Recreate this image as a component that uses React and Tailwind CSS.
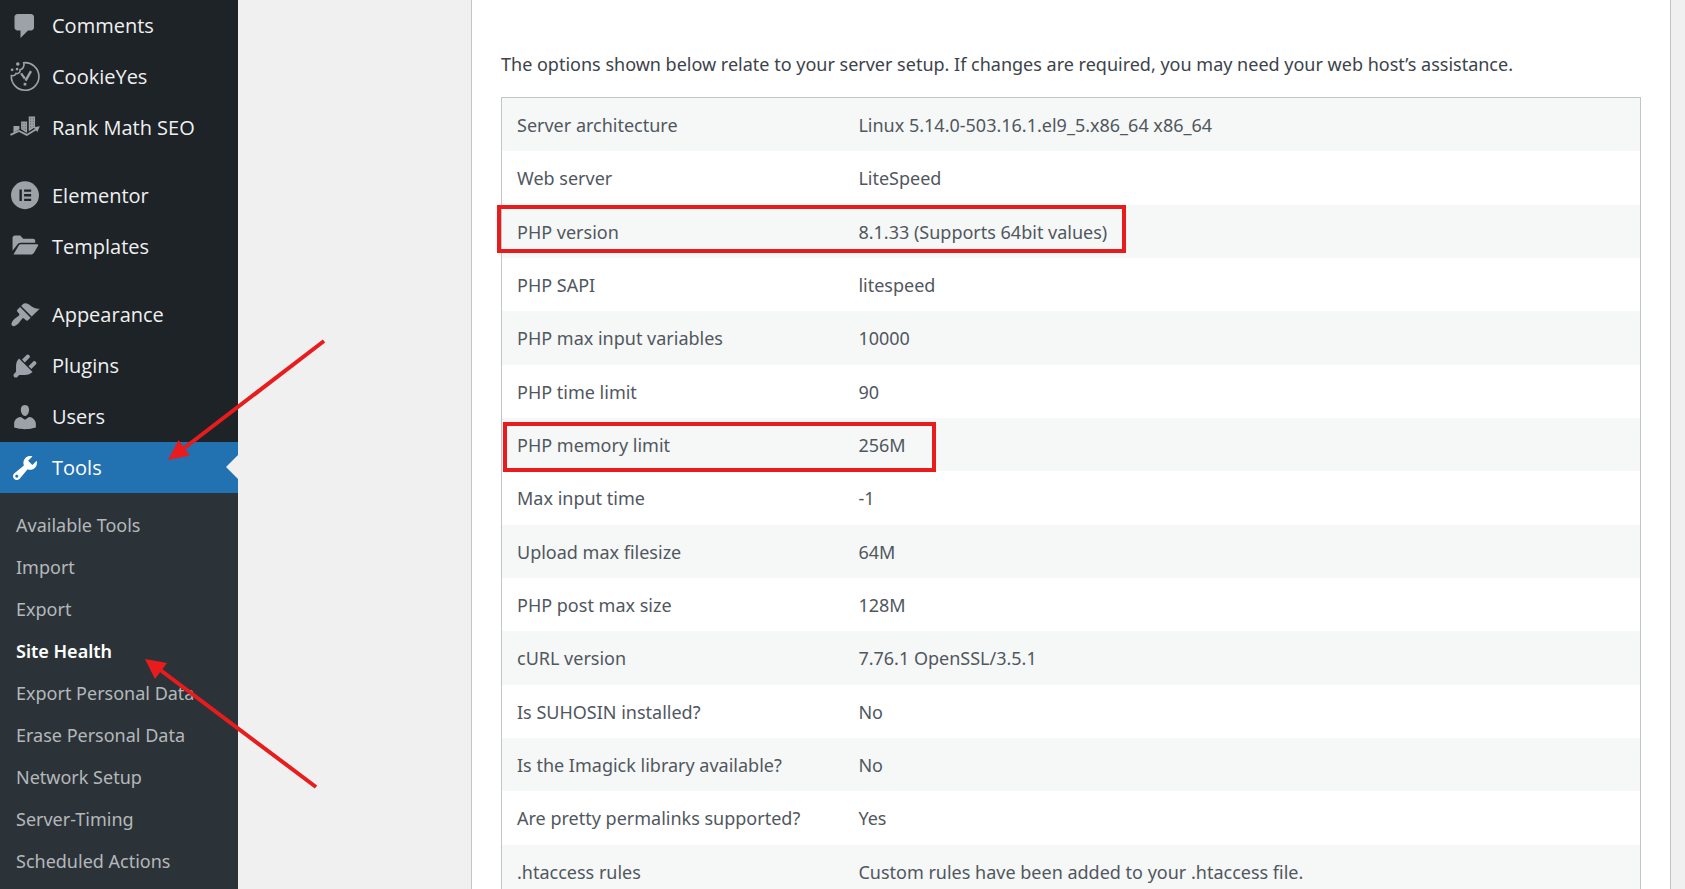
const ICONS = {
  comments: <path d="M5 2h9c1.1 0 2 .9 2 2v7c0 1.1-.9 2-2 2h-2l-5 5v-5H5c-1.1 0-2-.9-2-2V4c0-1.1.9-2 2-2z" />,
  cookie: (
    <>
      <path d="M9.2.5a9.200 9.200 0 1 1-8.300 8.600c1.500.3 2.600-.2 3.100-1.400 1.700.3 2.900-.9 2.700-2.500C8.600 4.800 9.800 2.800 9.200.5z" fill="none" stroke="currentColor" strokeWidth="1.100" />
      <circle cx="5.200" cy="1.300" r="1.200" />
      <circle cx="1.400" cy="5.200" r="0.900" />
      <circle cx="4.700" cy="4.700" r="0.900" />
      <path d="M7.400 7.600l2.500 3.500M14 6.100l-3.600 6.300" fill="none" stroke="currentColor" strokeWidth="1.600" />
      <rect x="9.100" y="13.900" width="1.800" height="1.800" />
    </>
  ),
  rank: (
    <>
      <path d="M2.300 8.700h4v2.200l-4 2.200zM7.400 5.600h4v7.200l-.5.400-3.500-2.300zM12.500 2.300h4.200v7.200l-4.200 2.700z" />
      <path d="M13.800 3.400v7M15.500 3.400v6M8.600 6.800v4M10.200 6.800v5" fill="none" stroke="#1d2327" strokeOpacity="0.450" strokeWidth="0.700" strokeDasharray="0.900 0.900" />
      <path d="M.3 14.600l5.700-2.600 5.200 2.600 6.500-4" fill="none" stroke="currentColor" strokeWidth="1.200" />
      <path d="M15.700 9.500l4.200-.6-1.700 3.800z" />
    </>
  ),
  elementor: (
    <>
      <circle cx="10" cy="9.500" r="9.300" />
      <path d="M6.300 5.700h1.600v7.600H6.300zM9.400 5.700h4.700v1.500H9.400zM9.400 8.700h4.700v1.600H9.400zM9.400 11.800h4.700v1.500H9.400z" fill="#1d2327" />
    </>
  ),
  folder: (
    <path d="M1.700 12.500V4c0-1 .7-1.700 1.600-1.700h3.500l2 2.200h6.600c.8 0 1.400.6 1.400 1.300v1.400H7.300c-1.200 0-2 .5-2.600 1.400zM2.300 15l3.400-5.800c.4-.7 1-1 1.700-1h10.800c.6 0 .8.500.5 1l-2.700 4.600c-.5.800-1.100 1.200-2 1.200z" />
  ),
  appearance: <path d="M14.480 11.060L7.410 3.990l1.500-1.500c.5-.56 2.300-.47 3.510.32 1.210.8 1.430 1.280 2.910 2.100 1.180.64 2.450 1.260 4.450.85zm-.71.71L6.700 4.700 4.930 6.470c-.39.39-.39 1.020 0 1.410l1.060 1.060c.39.39.39 1.030 0 1.420-.6.6-1.430 1.110-2.210 1.690-.35.26-.7.53-1.010.84C1.430 14.230.4 16.080 1.400 17.070c.99 1 2.840-.03 4.180-1.360.31-.31.58-.66.85-1.020.57-.78 1.080-1.610 1.690-2.210.39-.39 1.020-.39 1.410 0l1.060 1.060c.39.39 1.020.39 1.410 0z" />,
  plugins: <path d="M13.110 4.360L9.870 7.600 8 5.730l3.240-3.240c.35-.34 1.050-.2 1.560.32.52.51.66 1.210.31 1.550zm-8 1.770l.91-1.120 9.010 9.010-1.190.84c-.71.71-2.630 1.160-3.820 1.160H6.140L4.900 17.260c-.59.59-1.540.59-2.120 0-.59-.58-.59-1.530 0-2.120l1.240-1.240v-3.880c0-1.130.4-3.190 1.090-3.890zm7.260 3.970l3.240-3.240c.34-.35 1.040-.21 1.550.31.52.51.66 1.210.31 1.550l-3.240 3.250z" />,
  users: <path d="M10 9.250c-2.270 0-2.730-3.440-2.730-3.440C7 4.020 7.820 2 9.970 2c2.160 0 2.980 2.020 2.710 3.810 0 0-.41 3.440-2.680 3.440zm0 2.570L12.720 10c2.390 0 4.520 2.330 4.520 4.530v2.490s-3.650 1.130-7.240 1.130c-3.650 0-7.240-1.130-7.240-1.130v-2.490c0-2.250 1.940-4.480 4.470-4.480z" />,
  tools: <path d="M16.680 9.770c-1.340 1.340-3.300 1.670-4.950.99l-5.410 6.520c-.99.99-2.590.99-3.580 0s-.99-2.590 0-3.570l6.520-5.420c-.68-1.650-.35-3.610.99-4.950 1.280-1.280 3.120-1.620 4.720-1.060l-2.890 2.890 2.820 2.820 2.860-2.870c.53 1.580.18 3.390-1.080 4.650zM3.810 16.210c.4.39 1.040.39 1.430 0 .4-.4.4-1.040 0-1.430-.39-.4-1.030-.4-1.430 0-.39.39-.39 1.030 0 1.430z" />,
};

const MENU = [
  [
    ["comments", "Comments"],
    ["cookie", "CookieYes"],
    ["rank", "Rank Math SEO"],
  ],
  [
    ["elementor", "Elementor"],
    ["folder", "Templates"],
  ],
  [
    ["appearance", "Appearance"],
    ["plugins", "Plugins"],
    ["users", "Users"],
    ["tools", "Tools"],
  ],
];

const SUBMENU = [
  "Available Tools",
  "Import",
  "Export",
  "Site Health",
  "Export Personal Data",
  "Erase Personal Data",
  "Network Setup",
  "Server-Timing",
  "Scheduled Actions",
];

const ROWS = [
  ["Server architecture", "Linux 5.14.0-503.16.1.el9_5.x86_64 x86_64"],
  ["Web server", "LiteSpeed"],
  ["PHP version", "8.1.33 (Supports 64bit values)"],
  ["PHP SAPI", "litespeed"],
  ["PHP max input variables", "10000"],
  ["PHP time limit", "90"],
  ["PHP memory limit", "256M"],
  ["Max input time", "-1"],
  ["Upload max filesize", "64M"],
  ["PHP post max size", "128M"],
  ["cURL version", "7.76.1 OpenSSL/3.5.1"],
  ["Is SUHOSIN installed?", "No"],
  ["Is the Imagick library available?", "No"],
  ["Are pretty permalinks supported?", "Yes"],
  [".htaccess rules", "Custom rules have been added to your .htaccess file."],
];

function MenuItem({ icon, label }) {
  const active = label === "Tools";
  return (
    <li>
      <a
        href="#"
        className={
          active
            ? "relative flex h-[51px] items-center gap-3 bg-[#2271b1] pl-2.5 text-white"
            : "flex h-[51px] items-center gap-3 pl-2.5 text-[#f0f0f1]"
        }
      >
        <svg
          viewBox="0 0 20 20"
          fill="currentColor"
          aria-hidden="true"
          className={
            active ? "size-[30px] overflow-visible text-white" : "size-[30px] overflow-visible text-[#9ca2a7]"
          }
        >
          {ICONS[icon]}
        </svg>
        <span>{label}</span>
        {active && (
          <span className="absolute right-0 top-[13px] border-y-12 border-r-12 border-y-transparent border-r-[#f0f0f1]" />
        )}
      </a>
    </li>
  );
}

function Sidebar() {
  return (
    <nav className="w-[238px] shrink-0 bg-[#1d2327] text-[20px]">
      <div className="flex flex-col gap-[17px]">
        {MENU.map((group) => (
          <ul key={group[0][1]}>
            {group.map(([icon, label]) => (
              <MenuItem key={label} icon={icon} label={label} />
            ))}
          </ul>
        ))}
      </div>
      <ul className="bg-[#2c3338] py-[11px] font-['Noto_Sans',sans-serif] text-[18px]">
        {SUBMENU.map((label) => (
          <li key={label}>
            <a
              href="#"
              className={
                label === "Site Health"
                  ? "flex h-[42px] items-center pl-4 font-semibold text-white"
                  : "flex h-[42px] items-center pl-4 text-[#b4b8bb]"
              }
            >
              {label}
            </a>
          </li>
        ))}
      </ul>
    </nav>
  );
}

function Annotations() {
  return (
    <>
      <div className="absolute left-[497px] top-[205px] h-12 w-[629px] border-4 border-[#e81c1c]" />
      <div className="absolute left-[503px] top-[422px] h-[50px] w-[433px] border-4 border-[#e81c1c]" />
      <svg
        className="pointer-events-none absolute left-0 top-0 h-[800px] w-[340px] text-[#e81c1c]"
        viewBox="0 0 340 800"
        fill="currentColor"
        stroke="currentColor"
        aria-hidden="true"
      >
        <path d="M324 341L183 449" strokeWidth="4" />
        <path d="M168 460L178.500 440L190 455.500z" stroke="none" />
        <path d="M316 787L159 669" strokeWidth="4" />
        <path d="M145 659L167 663L155 679z" stroke="none" />
      </svg>
    </>
  );
}

export default function App() {
  return (
    <div className="relative flex h-screen overflow-hidden bg-[#f0f0f1] font-['Open_Sans','Noto_Sans',sans-serif]">
      <Sidebar />
      <main className="ml-[233px] mr-[14px] flex-1 border-x border-[#c3c4c7] bg-white px-[29px] pt-[50px] font-['Noto_Sans',sans-serif]">
        <p className="text-[18px] leading-7 text-[#3c434a]">
          The options shown below relate to your server setup. If changes are required, you may need your web host’s
          assistance.
        </p>
        <table className="mt-[19px] h-[802px] w-full table-fixed border-separate border-spacing-0 border border-[#c3c4c7] text-left text-[18px] text-[#50575e]">
          <tbody>
            {ROWS.map(([name, value]) => (
              <tr key={name} className="odd:bg-[#f6f7f7]">
                <th scope="row" className="w-[30%] px-[15px] pt-0.5 font-normal">
                  {name}
                </th>
                <td className="px-[15px] pt-0.5">{value}</td>
              </tr>
            ))}
          </tbody>
        </table>
      </main>
      <Annotations />
    </div>
  );
}
